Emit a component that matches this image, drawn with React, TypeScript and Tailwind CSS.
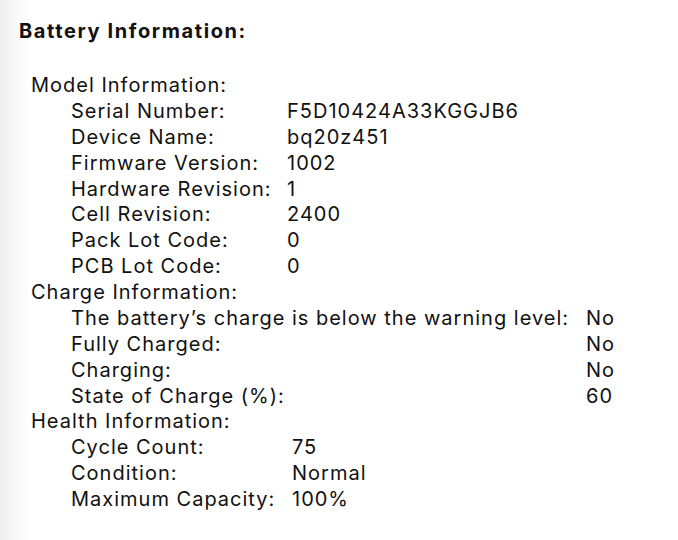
import React from "react";

const model: [string, string][] = [
  ["Serial Number:", "F5D10424A33KGGJB6"],
  ["Device Name:", "bq20z451"],
  ["Firmware Version:", "1002"],
  ["Hardware Revision:", "1"],
  ["Cell Revision:", "2400"],
  ["Pack Lot Code:", "0"],
  ["PCB Lot Code:", "0"],
];

const charge: [string, string][] = [
  ["The battery\u2019s charge is below the warning level:", "No"],
  ["Fully Charged:", "No"],
  ["Charging:", "No"],
  ["State of Charge (%):", "60"],
];

const health: [string, string][] = [
  ["Cycle Count:", "75"],
  ["Condition:", "Normal"],
  ["Maximum Capacity:", "100%"],
];

export default function App() {
  return (
    <div
      className="w-[678px] h-[540px] overflow-hidden bg-[linear-gradient(to_right,#eeeeee_0px,#f8f8f8_14px,#ffffff_34px)] text-[#111111] text-[20px] tracking-[1px] leading-[25.875px] pl-[19px] pt-[18px]"
      style={{ fontFamily: "Inter, 'Liberation Sans', sans-serif" }}
    >
      <div className="font-bold tracking-[1.6px] leading-[26px] mb-[29px]">Battery Information:</div>
      <div className="pl-[12px]">
        <div>Model Information:</div>
        <div className="pl-[40px] grid grid-cols-[216px_auto]">
          {model.map(([k, v]) => (
            <React.Fragment key={k}>
              <div className="whitespace-nowrap">{k}</div>
              <div>{v}</div>
            </React.Fragment>
          ))}
        </div>
        <div>Charge Information:</div>
        <div className="pl-[40px] grid grid-cols-[515px_auto]">
          {charge.map(([k, v]) => (
            <React.Fragment key={k}>
              <div className="whitespace-nowrap">{k}</div>
              <div>{v}</div>
            </React.Fragment>
          ))}
        </div>
        <div>Health Information:</div>
        <div className="pl-[40px] grid grid-cols-[221px_auto]">
          {health.map(([k, v]) => (
            <React.Fragment key={k}>
              <div className="whitespace-nowrap">{k}</div>
              <div>{v}</div>
            </React.Fragment>
          ))}
        </div>
      </div>
    </div>
  );
}
